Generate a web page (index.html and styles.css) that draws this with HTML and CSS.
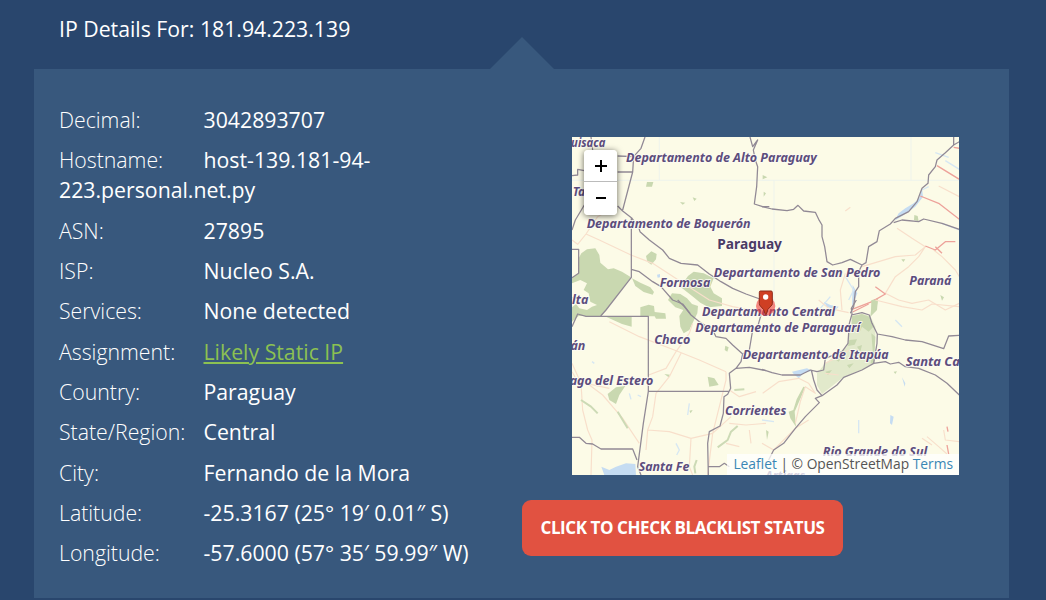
FILE: index.html
```
<!DOCTYPE html>
<html lang="en">
<head>
<meta charset="utf-8">
<title>IP Details</title>
<link rel="stylesheet" href="styles.css">
</head>
<body>
<h1 class="title">IP Details For: 181.94.223.139</h1>
<main class="panel">
  <svg class="notch" viewBox="0 0 64 32" aria-hidden="true"><path d="M0 32 32 0 64 32Z"/></svg>
  <div class="details">
    <p class="row"><span class="label">Decimal:</span><span>3042893707</span></p>
    <p class="row"><span class="label">Hostname:</span><span>host-139.181-94-<br>223.personal.net.py</span></p>
    <p class="row"><span class="label">ASN:</span><span>27895</span></p>
    <p class="row"><span class="label">ISP:</span><span>Nucleo S.A.</span></p>
    <p class="row"><span class="label">Services:</span><span>None detected</span></p>
    <p class="row"><span class="label">Assignment:</span><a class="link" href="#">Likely Static IP</a></p>
    <p class="row"><span class="label">Country:</span><span>Paraguay</span></p>
    <p class="row"><span class="label">State/Region:</span><span>Central</span></p>
    <p class="row"><span class="label">City:</span><span>Fernando de la Mora</span></p>
    <p class="row"><span class="label">Latitude:</span><span>-25.3167 (25° 19′ 0.01″ S)</span></p>
    <p class="row"><span class="label">Longitude:</span><span>-57.6000 (57° 35′ 59.99″ W)</span></p>
  </div>
  <div class="side">
    <div class="map">
      <svg class="tiles" viewBox="0 0 1161 1014">
        <g transform="translate(0 279)">
          <path class="wood" d="M0 58H20V85L28 70 45 58 70 55 82 75 85 98 108 118 125 115 150 125 177 142 88 258H20L0 275V232L12 222 22 235 45 240 60 230 75 225 55 215 50 190 35 180 45 160 25 150 0 160V145L18 130V60ZM180 145 205 158 235 172 246 186 242 194 215 186 190 168ZM222 78 238 64 254 72 252 88 238 104 226 95ZM205 232 230 224 246 228 248 246 280 250 282 266 252 266 248 259H205ZM102 260H179V290L150 282ZM288 210 300 190 325 192 345 205 360 222 378 228 376 250 365 272 352 300 335 310 325 290 322 258 334 240 310 232ZM325 170 348 138 365 125 395 130 425 145 415 170 425 190 450 205V228L410 232 385 218 365 202Z"/>
        </g>
        <g transform="translate(-18 -21)">
          <path class="wood" d="M243 156 262 156 258 170 240 170ZM342 216 358 218 350 224ZM380 202 392 206 385 213Z"/>
          <path class="road" d="M18 330 35 343 60 312 100 330 195 375 260 400 360 465 430 510 500 530 580 545M60 312 95 260 130 240"/>
          <path class="grid" d="M18 151H610M280 21V151"/>
          <path class="border" d="M237 21 225 55 203 80 200 126 170 240M155 78 203 80M155 126H200M155 228 170 243 198 265 218 292 222 305 250 330 290 360 310 385 345 400 395 405 430 432 465 455 500 475 540 492 590 510M196 265V442L120 540 104 558M196 418 220 425 260 455 285 470 320 510 350 522 372 550M18 358H38V430L18 443M18 137 35 135V118L55 122M75 21 80 60M55 225 28 270 18 300M552 21 560 50 575 30 562 60 568 90 575 110 572 170 565 222 590 230 610 230"/>
          <path class="water" d="M273 434 282 432 282 442 275 443Z"/>
        </g>
        <g transform="translate(570 -21)">
          <path class="wood" d="M330 510 348 505 345 540 325 560ZM535 495 546 502 540 512ZM457 255 467 258 470 274 456 270ZM2 135 16 142 2 148ZM5 185 12 190 5 200ZM418 388 430 388 424 396Z"/>
          <path class="water" d="M480 175 472 205 455 220 430 235 410 250 398 272 425 255 460 230 483 200ZM185 515 205 525 230 530 220 540 195 530ZM272 465 286 490 270 530Z"/>
          <path class="stream" d="M520 68 560 82M550 92 592 118M500 170 480 180M540 280 592 300M205 500 175 535M250 440 275 480 260 510"/>
          <path class="road" d="M405 295 450 325 490 350 470 380 440 410 400 440 370 490 410 510 450 520 500 510 550 540 592 520M300 410 350 395 400 380 460 375 490 350M515 360 540 380 580 420 592 440M250 430 235 480 240 540M250 243 265 232M530 168 592 200"/>
          <path class="highway" d="M525 107 592 148M475 198 530 220 592 268M490 348 520 360 550 335 580 335M340 470 370 492 330 515 270 538M575 52 592 55M520 350 540 370"/>
          <path class="grid" d="M0 151H592M447 21V151M36 151V540"/>
          <path class="border" d="M0 230 30 237 75 242 95 238 108 226 125 243 160 247 170 268 180 285 180 320 188 350 195 395 212 405 240 398 265 388 300 405 312 398 320 350 345 335 352 302 385 282 400 265 440 245 465 215 480 175 498 160 500 135 520 110 525 90 550 68 575 45 592 35M575 21V45M395 278 420 270 470 275 485 267 540 280 592 298M300 405 290 425 290 470 280 485 275 530 265 550"/>
        </g>
        <g transform="translate(-18 489)">
          <path class="wood" d="M125 282 150 262 178 258 160 285 150 312 130 300ZM425 230 445 235 458 255 430 260ZM478 137 488 142 484 155 476 150ZM295 222 312 224 308 232ZM370 332 380 330 374 340Z"/>
          <path class="water" d="M106 500 130 510 150 500 180 490 208 492 210 525H115Z"/>
          <path class="stream" d="M330 430 340 450 332 465M370 310 365 345M190 280 195 298M215 285 225 290M490 340 510 330M78 185 85 190"/>
          <path class="road" d="M130 65 220 110 325 150 400 180 480 215M248 225 300 205 330 155 370 100 380 70M18 190 45 250 50 330 65 390 78 420 75 525M50 240 110 285 170 355 220 430M18 215 35 245 130 265M240 450 245 390 260 350 270 280 310 230 345 160M245 390 310 395 375 415 440 400 495 350M375 415 370 500 380 525M480 215 480 240 440 400 425 525M490 270 520 290 570 275M490 370 540 375 600 370M550 390 555 430M480 430 520 440"/>
          <path class="green" d="M45 300 75 320 95 340M155 335 170 360 185 385M505 270 535 268M515 378 495 395 485 420 455 442M392 480 385 500 388 520"/>
          <path class="border" d="M18 80 35 42 60 49H247V274H490M247 274 232 370 215 500 225 525M18 412 40 412 60 430 80 432 105 447H200L213 480M335 0 355 20 375 45 400 65 440 90 450 110 480 115 500 135 530 162 525 185 510 205 490 220 494 265 485 283 474 290 472 340 462 378 430 395 425 430 427 525M510 205 550 202 600 212M585 45 575 80 560 90 550 150 530 162M427 500 460 500 475 490 490 500"/>
        </g>
        <g transform="translate(570 489)">
          <path class="tint" d="M270 48 300 42 325 48 340 80 340 120 335 190 300 210 240 235 180 282 165 255 165 220 190 190 255 140Z"/>
          <path class="wood" d="M270 48 300 42 322 50 334 80 320 95 300 80 292 98 276 90 270 75ZM262 120 285 118 278 134 258 138ZM328 100 340 110 336 190 326 190 332 150ZM215 175 240 170 230 185ZM190 215 210 210 198 225ZM255 195 275 190 262 205ZM285 140 300 135 295 155ZM328 0H348L342 32 328 40ZM104 298 124 260 130 262 98 335 102 380 85 355 80 335 94 330ZM395 215 405 214 400 222ZM12 390 20 395 15 420Z"/>
          <path class="water" d="M90 215 135 205 150 212 125 220 110 235 95 222ZM385 345 395 350 390 375 384 370ZM420 232 430 250 428 260Z"/>
          <path class="road" d="M2 280 50 245 110 235 140 250 160 280 130 260 115 305 100 370M0 430 35 450 100 385 140 360M190 190 230 170 260 150M190 220 230 225M170 0 200 25 260 38M340 0 420 20 480 30 510 12 592 20M495 410 530 440 555 462M545 390 550 420 592 425M480 415 510 435"/>
          <path class="highway" d="M272 36 320 12M555 435 560 462M555 380 558 395"/>
          <path class="stream" d="M0 360 36 365M290 360V400M400 60 420 80"/>
          <path class="border" d="M283 0 268 25 270 42 262 70 258 130 240 155 190 175 185 210 165 215 145 210 115 225 60 225 30 218 0 208M268 45 300 38 322 45 330 70 346 102 345 130 335 190M346 102 390 110 430 120 480 125 545 146 560 108 592 106M335 190 300 210 245 232 225 255 180 287 160 295 172 308 130 350 100 385 65 430 35 450 20 480M335 190 370 185 385 192 410 187 430 200 470 205 520 225 555 250 592 285M148 210 155 240 165 270 180 287"/>
        </g>
        <g class="region">
          <text x="-84" y="29" textLength="184" lengthAdjust="spacingAndGlyphs">Chuquisaca</text>
          <text x="2" y="178" textLength="96" lengthAdjust="spacingAndGlyphs">Tarija</text>
          <text x="162" y="74" textLength="572" lengthAdjust="spacingAndGlyphs">Departamento de Alto Paraguay</text>
          <text x="44" y="273" textLength="492" lengthAdjust="spacingAndGlyphs">Departamento de Boquerón</text>
          <text x="425" y="421" textLength="500" lengthAdjust="spacingAndGlyphs">Departamento de San Pedro</text>
          <text x="263" y="451" textLength="152" lengthAdjust="spacingAndGlyphs">Formosa</text>
          <text x="1012" y="443" textLength="126" lengthAdjust="spacingAndGlyphs">Paraná</text>
          <text x="-42" y="500" textLength="91" lengthAdjust="spacingAndGlyphs">Salta</text>
          <text x="390" y="538" textLength="400" lengthAdjust="spacingAndGlyphs">Departamento Central</text>
          <text x="370" y="586" textLength="495" lengthAdjust="spacingAndGlyphs">Departamento de Paraguarí</text>
          <text x="247" y="621" textLength="108" lengthAdjust="spacingAndGlyphs">Chaco</text>
          <text x="-120" y="640" textLength="160" lengthAdjust="spacingAndGlyphs">Tucumán</text>
          <text x="512" y="665" textLength="438" lengthAdjust="spacingAndGlyphs">Departamento de Itapúa</text>
          <text x="1001" y="687" textLength="276" lengthAdjust="spacingAndGlyphs">Santa Catarina</text>
          <text x="-98" y="743" textLength="342" lengthAdjust="spacingAndGlyphs">Santiago del Estero</text>
          <text x="459" y="834" textLength="184" lengthAdjust="spacingAndGlyphs">Corrientes</text>
          <text x="200" y="1003" textLength="152" lengthAdjust="spacingAndGlyphs">Santa Fe</text>
          <text x="752" y="956" textLength="314" lengthAdjust="spacingAndGlyphs">Rio Grande do Sul</text>
          <text x="580" y="1028" textLength="120" lengthAdjust="spacingAndGlyphs">Artigas</text>
        </g>
        <text class="country" x="436" y="335" textLength="194" lengthAdjust="spacingAndGlyphs">Paraguay</text>
        <circle class="radius" cx="581" cy="507" r="29"/>
        <path class="pin" d="M565 462H597Q601 462 601 466V500Q601 504 597 507L587 518 583 532H580L575 518 565 507Q562 504 562 500V466Q562 462 565 462Z"/>
        <circle class="hole" cx="581" cy="480" r="8"/>
      </svg>
      <div class="zoom">
        <button class="zoom-btn" type="button" aria-label="Zoom in"><svg viewBox="0 0 14 14"><path d="M1 7H13M7 1V13"/></svg></button>
        <button class="zoom-btn" type="button" aria-label="Zoom out"><svg viewBox="0 0 14 14"><path d="M2 6H12"/></svg></button>
      </div>
      <div class="credit"><a href="#">Leaflet</a> | © OpenStreetMap <a href="#">Terms</a></div>
    </div>
    <button class="cta" type="button">CLICK TO CHECK BLACKLIST STATUS</button>
  </div>
</main>
</body>
</html>
```
FILE: styles.css
```
* { box-sizing: border-box; }
body {
  margin: 0;
  height: 600px;
  overflow: hidden;
  background: #29466d;
  color: #fff;
  font: 21.28px/30.3px "Open Sans", sans-serif;
}
.title {
  margin: 0;
  height: 69px;
  padding: 14px 0 0 59px;
  font-size: 21.25px;
  font-weight: 400;
}
.panel {
  position: relative;
  display: flex;
  width: 975px;
  height: 529px;
  margin-left: 34px;
  padding: 35px 25px 0;
  background: #38587d;
}
.notch {
  position: absolute;
  left: 456px;
  top: -32px;
  width: 64px;
  height: 32px;
  fill: #38587d;
}
.details { width: 463px; padding-top: .6px; }
.row { margin: 0 0 10.05px; white-space: nowrap; }
.label { display: inline-block; width: 144.5px; font-weight: 300; }
.link { color: #8cc152; text-decoration-thickness: 2px; text-underline-offset: 2px; }
.side { display: flex; flex-direction: column; align-items: flex-start; gap: 25px; padding-top: 33px; }
.map {
  position: relative;
  width: 387px;
  height: 338px;
  margin-left: 50px;
  overflow: hidden;
  background: #fcfbe7;
}
.tiles { display: block; width: 387px; height: 338px; }
.tiles path { fill: none; stroke-linejoin: round; }
.tiles .wood { fill: #c9d8b0; }
.tiles .tint { fill: #e2e9cb; }
.tiles .water { fill: #c5dcf2; }
.tiles .stream { stroke: #d6e7f3; stroke-width: 4; }
.tiles .green { stroke: #ccdab5; stroke-width: 6; }
.tiles .grid { stroke: #eef3ec; stroke-width: 3; }
.tiles .road { stroke: #f8dfcb; stroke-width: 3.5; }
.tiles .highway { stroke: #eda29a; stroke-width: 4; }
.tiles .border { stroke: #918995; stroke-width: 3.8; }
.region, .country {
  font-family: "Noto Sans", sans-serif;
  font-size: 38px;
  font-weight: 700;
  fill: #5c4d7c;
  stroke: #fdfcf3;
  stroke-width: 5px;
  paint-order: stroke;
}
.region { font-style: italic; }
.country { font-size: 41px; fill: #4b3b66; }
.radius { fill: #f03b3b; fill-opacity: .6; }
.tiles .pin { fill: #cf3f24; stroke: #8d2d1c; stroke-width: 3; }
.hole { fill: #fff; }
.zoom {
  position: absolute;
  left: 12px;
  top: 13px;
  width: 33px;
  border-radius: 4px;
  overflow: hidden;
  box-shadow: 0 1px 6px rgba(0, 0, 0, .6);
}
.zoom-btn {
  display: grid;
  place-items: center;
  width: 33px;
  height: 33px;
  padding: 0;
  border: 0;
  background: #fff;
}
.zoom-btn:first-child { height: 32px; border-bottom: 1px solid #bbb; }
.zoom-btn svg { width: 14px; height: 14px; stroke: #000; stroke-width: 2; }
.credit {
  position: absolute;
  right: 0;
  bottom: 0;
  height: 21px;
  padding: 0 6px;
  background: rgba(255, 255, 255, .75);
  color: #555;
  font-size: 13.8px;
  line-height: 20px;
  white-space: nowrap;
}
.credit a { color: #3a87b5; text-decoration: none; }
.cta {
  width: 321px;
  height: 56px;
  padding: 0;
  border: 0;
  border-radius: 9px;
  background: #e15241;
  color: #fff;
  font: 700 17px/56px "Open Sans", sans-serif;
  letter-spacing: -.42px;
  white-space: nowrap;
}
```
